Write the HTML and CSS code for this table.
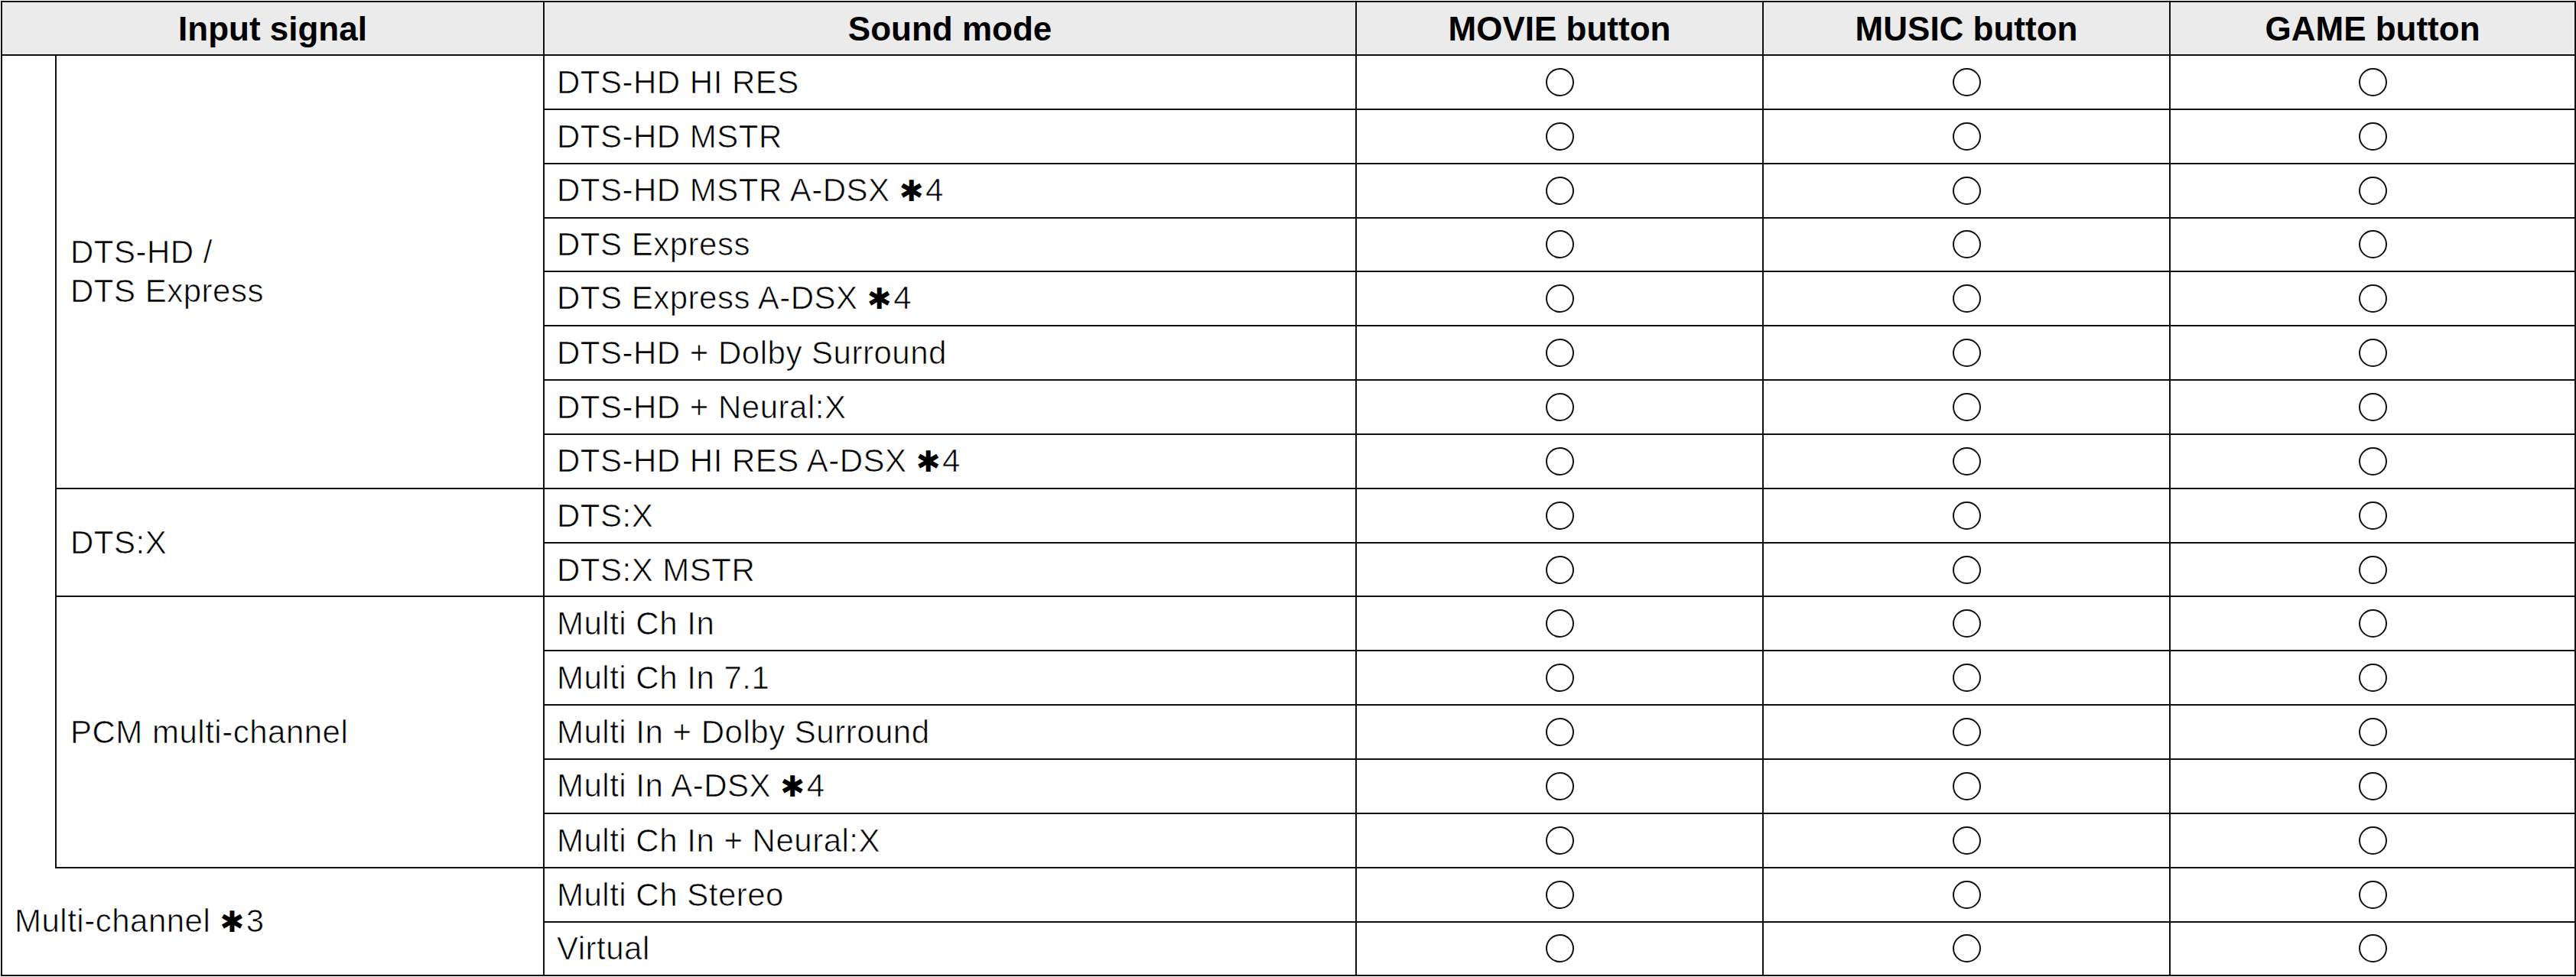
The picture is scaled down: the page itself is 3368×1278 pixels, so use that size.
FILE: index.html
```html
<!DOCTYPE html>
<html lang="en">
<head>
<meta charset="utf-8">
<title>Sound mode table</title>
<link rel="stylesheet" href="styles.css">
</head>
<body>
<table class="modes">
  <colgroup>
    <col class="c-brk">
    <col class="c-sig">
    <col class="c-mode">
    <col class="c-btn">
    <col class="c-btn">
    <col class="c-btn-last">
  </colgroup>
  <thead>
    <tr class="head">
      <th colspan="2">Input signal</th>
      <th>Sound mode</th>
      <th>MOVIE button</th>
      <th>MUSIC button</th>
      <th>GAME button</th>
    </tr>
  </thead>
  <tbody>
    <tr>
      <td class="brk" rowspan="15"></td>
      <td class="sig" rowspan="8">DTS-HD /<br>DTS Express</td>
      <td class="mode">DTS-HD HI RES</td>
      <td class="mark"><span class="circle"></span></td>
      <td class="mark"><span class="circle"></span></td>
      <td class="mark"><span class="circle"></span></td>
    </tr>
    <tr>
      <td class="mode">DTS-HD MSTR</td>
      <td class="mark"><span class="circle"></span></td>
      <td class="mark"><span class="circle"></span></td>
      <td class="mark"><span class="circle"></span></td>
    </tr>
    <tr>
      <td class="mode">DTS-HD MSTR A-DSX <span class="ast">✱</span>4</td>
      <td class="mark"><span class="circle"></span></td>
      <td class="mark"><span class="circle"></span></td>
      <td class="mark"><span class="circle"></span></td>
    </tr>
    <tr>
      <td class="mode">DTS Express</td>
      <td class="mark"><span class="circle"></span></td>
      <td class="mark"><span class="circle"></span></td>
      <td class="mark"><span class="circle"></span></td>
    </tr>
    <tr>
      <td class="mode">DTS Express A-DSX <span class="ast">✱</span>4</td>
      <td class="mark"><span class="circle"></span></td>
      <td class="mark"><span class="circle"></span></td>
      <td class="mark"><span class="circle"></span></td>
    </tr>
    <tr>
      <td class="mode">DTS-HD + Dolby Surround</td>
      <td class="mark"><span class="circle"></span></td>
      <td class="mark"><span class="circle"></span></td>
      <td class="mark"><span class="circle"></span></td>
    </tr>
    <tr>
      <td class="mode">DTS-HD + Neural:X</td>
      <td class="mark"><span class="circle"></span></td>
      <td class="mark"><span class="circle"></span></td>
      <td class="mark"><span class="circle"></span></td>
    </tr>
    <tr>
      <td class="mode">DTS-HD HI RES A-DSX <span class="ast">✱</span>4</td>
      <td class="mark"><span class="circle"></span></td>
      <td class="mark"><span class="circle"></span></td>
      <td class="mark"><span class="circle"></span></td>
    </tr>
    <tr>
      <td class="sig" rowspan="2">DTS:X</td>
      <td class="mode">DTS:X</td>
      <td class="mark"><span class="circle"></span></td>
      <td class="mark"><span class="circle"></span></td>
      <td class="mark"><span class="circle"></span></td>
    </tr>
    <tr>
      <td class="mode">DTS:X MSTR</td>
      <td class="mark"><span class="circle"></span></td>
      <td class="mark"><span class="circle"></span></td>
      <td class="mark"><span class="circle"></span></td>
    </tr>
    <tr>
      <td class="sig" rowspan="5">PCM multi-channel</td>
      <td class="mode">Multi Ch In</td>
      <td class="mark"><span class="circle"></span></td>
      <td class="mark"><span class="circle"></span></td>
      <td class="mark"><span class="circle"></span></td>
    </tr>
    <tr>
      <td class="mode">Multi Ch In 7.1</td>
      <td class="mark"><span class="circle"></span></td>
      <td class="mark"><span class="circle"></span></td>
      <td class="mark"><span class="circle"></span></td>
    </tr>
    <tr>
      <td class="mode">Multi In + Dolby Surround</td>
      <td class="mark"><span class="circle"></span></td>
      <td class="mark"><span class="circle"></span></td>
      <td class="mark"><span class="circle"></span></td>
    </tr>
    <tr>
      <td class="mode">Multi In A-DSX <span class="ast">✱</span>4</td>
      <td class="mark"><span class="circle"></span></td>
      <td class="mark"><span class="circle"></span></td>
      <td class="mark"><span class="circle"></span></td>
    </tr>
    <tr>
      <td class="mode">Multi Ch In + Neural:X</td>
      <td class="mark"><span class="circle"></span></td>
      <td class="mark"><span class="circle"></span></td>
      <td class="mark"><span class="circle"></span></td>
    </tr>
    <tr>
      <td class="multi" colspan="2" rowspan="2">Multi-channel <span class="ast">✱</span>3</td>
      <td class="mode">Multi Ch Stereo</td>
      <td class="mark"><span class="circle"></span></td>
      <td class="mark"><span class="circle"></span></td>
      <td class="mark"><span class="circle"></span></td>
    </tr>
    <tr>
      <td class="mode">Virtual</td>
      <td class="mark"><span class="circle"></span></td>
      <td class="mark"><span class="circle"></span></td>
      <td class="mark"><span class="circle"></span></td>
    </tr>
  </tbody>
</table>
</body>
</html>
```
FILE: styles.css
```css
html, body {
  margin: 0;
  padding: 0;
  background: #ffffff;
}

body {
  font-family: "Liberation Sans", Arial, sans-serif;
  color: #000;
}

.modes {
  margin: 1px 0 0 1px;
  width: 3366px;
  table-layout: fixed;
  border-collapse: collapse;
  font-size: 42px;
  line-height: 51px;
}

.c-brk { width: 71px; }
.c-sig { width: 638px; }
.c-mode { width: 1062px; }
.c-btn { width: 532px; }
.c-btn-last { width: 530px; }

.modes th,
.modes td {
  border: 2px solid #111;
  padding: 0 16px;
  vertical-align: middle;
  text-align: left;
  white-space: nowrap;
}

.modes td {
  letter-spacing: 0.5px;
  -webkit-text-stroke: 0.7px #fff;
}

.modes tr {
  height: 70.85px;
}

.modes .head {
  height: 70px;
}

.modes th {
  background: #ebebeb;
  font-size: 44px;
  font-weight: bold;
  text-align: center;
  padding: 0 8px;
}

.modes .brk {
  border-bottom: none;
  padding: 0;
}

.modes .multi {
  border-top: none;
  padding-left: 16px;
}

.modes .sig {
  padding-left: 18px;
}

.modes .mark {
  padding: 0;
  line-height: 0;
}

.circle {
  display: block;
  box-sizing: border-box;
  width: 37px;
  height: 37px;
  margin: 0 auto;
  border: 2px solid #111;
  border-radius: 50%;
}

.ast {
  font-family: "DejaVu Sans", sans-serif;
  font-size: 38px;
  -webkit-text-stroke: 0;
  margin-right: 2px;
}
```
